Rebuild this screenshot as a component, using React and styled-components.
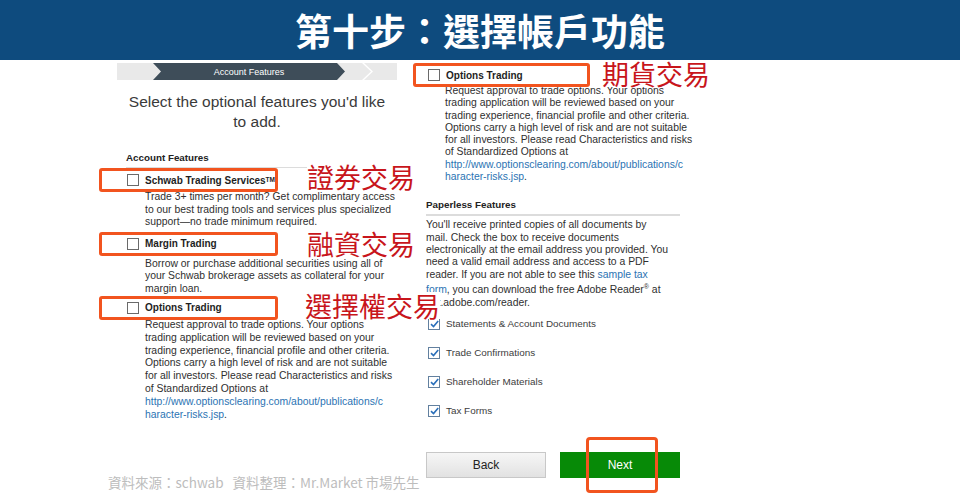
import React from "react";
import styled, { createGlobalStyle } from "styled-components";

const Global = createGlobalStyle`
  html, body { margin: 0; padding: 0; background: #fff; }
  body {
    width: 960px; height: 502px; overflow: hidden;
    font-family: "Liberation Sans", Arial, sans-serif;
    color: #2f2f2f;
  }
`;

const Header = styled.header`
  height: 60px;
  background: #0e4b7e;
  display: flex;
  align-items: center;
  justify-content: center;
  color: #fff;
  font-family: "Noto Sans CJK TC", "Noto Sans CJK SC", sans-serif;
  font-weight: 700;
  font-size: 37px;
  line-height: 1;
`;

const Main = styled.main`
  display: flex;
  padding-left: 99px;
`;

const LeftCol = styled.section`
  width: 311px;
  height: 442px;
  display: flex;
  flex-direction: column;
`;

const RightCol = styled.section`
  width: 290px;
  display: flex;
  flex-direction: column;
`;

const StepBar = styled.div`
  margin: 3px 0 0 18px;
  width: 280px;
  height: 17px;
  background: #e9e9e9;
  display: flex;
`;

const StepGap = styled.div`
  width: ${(p) => p.$w}px;
  flex: none;
`;

const ActiveStep = styled.div`
  width: 192px;
  flex: none;
  background: #3e4d59;
  color: #fff;
  font-size: 9px;
  display: flex;
  align-items: center;
  justify-content: center;
  clip-path: polygon(0 0, calc(100% - 8px) 0, 100% 50%, calc(100% - 8px) 100%, 0 100%, 8px 50%);
`;

const Chevron = styled.div`
  width: 11px;
  height: 17px;
  flex: none;
  background: #fff;
  clip-path: polygon(0 0, 2px 0, 100% 50%, 2px 100%, 0 100%, calc(100% - 2px) 50%);
`;

const Lead = styled.h1`
  margin: 12px 0 0 18px;
  width: 280px;
  text-align: center;
  font-size: 15.5px;
  line-height: 20px;
  font-weight: 400;
  color: #3a3a3a;
`;

const SectionTitle = styled.h2`
  margin: ${(p) => p.$mt}px 0 0 ${(p) => p.$ml}px;
  width: ${(p) => p.$w}px;
  font-size: 9.8px;
  line-height: 14px;
  font-weight: 700;
  color: #222;
  padding-bottom: 2px;
  border-bottom: ${(p) => p.$line}px solid #dcdcdc;
`;

const Highlight = styled.div`
  position: relative;
  z-index: 2;
  box-sizing: border-box;
  margin: ${(p) => p.$mt}px 0 0 ${(p) => p.$ml}px;
  width: ${(p) => p.$w}px;
  height: 24px;
  border: 3px solid #f2541f;
  border-radius: 3px;
  display: flex;
  align-items: center;
  padding-left: ${(p) => p.$pl}px;
`;

const Box = styled.span`
  width: 12px;
  height: 12px;
  box-sizing: border-box;
  border: 1.5px solid ${(p) => (p.$checked ? "#62809f" : "#6a6a6a")};
  background: #fff;
  flex: none;
  display: flex;
  align-items: center;
  justify-content: center;
`;

const OptionLabel = styled.span`
  margin-left: 6px;
  font-size: ${(p) => (p.$bold ? 10 : 9.9)}px;
  font-weight: ${(p) => (p.$bold ? 700 : 400)};
  color: ${(p) => (p.$bold ? "#1e1e1e" : "#3c3c3c")};
  white-space: nowrap;
`;

const Tm = styled.span`
  font-size: 6.5px;
  vertical-align: 2px;
`;

const Note = styled.span`
  position: absolute;
  left: ${(p) => p.$x}px;
  top: ${(p) => p.$y}px;
  font-family: "Noto Sans CJK TC", "Noto Sans CJK SC", sans-serif;
  font-size: 27px;
  line-height: 1;
  color: #c8151b;
  background: #fff;
  white-space: nowrap;
  z-index: 5;
`;

const Desc = styled.p`
  margin: ${(p) => p.$mt}px 0 0 ${(p) => p.$ml}px;
  font-size: 10.4px;
  line-height: ${(p) => p.$lh}px;
  color: #2f2f2f;
`;

const Line = styled.span`
  display: block;
  white-space: nowrap;
`;

const Link = styled.span`
  color: #2b73b3;
`;

const Reg = styled.sup`
  font-size: 7px;
`;

const CheckRow = styled.div`
  margin-left: 18px;
  height: 29px;
  display: flex;
  align-items: center;
`;

const Buttons = styled.div`
  margin: 27px 0 0 16px;
  display: flex;
  gap: 14px;
`;

const Button = styled.button`
  position: relative;
  width: 120px;
  height: 26px;
  padding: 0;
  box-sizing: border-box;
  font-family: "Liberation Sans", sans-serif;
  font-size: 12px;
  cursor: pointer;
  border: 1px solid ${(p) => (p.$primary ? "#078a07" : "#c8c8c8")};
  background: ${(p) => (p.$primary ? "#078a07" : "linear-gradient(#f6f6f6, #e2e2e2)")};
  color: ${(p) => (p.$primary ? "#fff" : "#222")};
`;

const ButtonMark = styled.span`
  position: absolute;
  left: 25px;
  top: -16px;
  width: 72px;
  height: 56px;
  box-sizing: border-box;
  border: 3px solid #f2541f;
  border-radius: 4px;
`;

const Source = styled.footer`
  margin: auto 0 10px 9px;
  font-family: "Noto Sans CJK TC", "Noto Sans CJK SC", sans-serif;
  font-size: 13.5px;
  line-height: 20px;
  color: #bdbdbd;
  white-space: pre;
`;

const CheckIcon = () => (
  <svg width="9" height="8" viewBox="0 0 9 8">
    <path d="M1 4.2 L3.5 6.6 L8.2 1" fill="none" stroke="#2a6fba" strokeWidth="1.6" />
  </svg>
);

const Check = ({ checked }) => <Box $checked={checked}>{checked && <CheckIcon />}</Box>;

const OptionsDesc = ({ ml, mt, lh }) => (
  <Desc $ml={ml} $mt={mt} $lh={lh}>
    <Line>Request approval to trade options. Your options</Line>
    <Line>trading application will be reviewed based on your</Line>
    <Line>trading experience, financial profile and other criteria.</Line>
    <Line>Options carry a high level of risk and are not suitable</Line>
    <Line>for all investors. Please read Characteristics and risks</Line>
    <Line>of Standardized Options at</Line>
    <Line>
      <Link>http://www.optionsclearing.com/about/publications/c</Link>
    </Line>
    <Line>
      <Link>haracter-risks.jsp</Link>.
    </Line>
  </Desc>
);

export default function App() {
  return (
    <>
      <Global />
      <Header>第十步：選擇帳戶功能</Header>
      <Main>
        <LeftCol>
          <StepBar>
            <StepGap $w={36} />
            <ActiveStep>Account Features</ActiveStep>
            <StepGap $w={17} />
            <Chevron />
          </StepBar>
          <Lead>
            Select the optional features you'd like
            <br />
            to add.
          </Lead>
          <SectionTitle $mt={19} $ml={27} $w={266} $line={1}>Account Features</SectionTitle>

          <Highlight $mt={0} $ml={0} $w={179} $pl={25}>
            <Check />
            <OptionLabel $bold>
              Schwab Trading Services<Tm>TM</Tm>
            </OptionLabel>
            <Note $x={205} $y={-8}>證券交易</Note>
          </Highlight>
          <Desc $ml={46} $mt={-1} $lh={12.5}>
            <Line>Trade 3+ times per month? Get complimentary access</Line>
            <Line>to our best trading tools and services plus specialized</Line>
            <Line>support—no trade minimum required.</Line>
          </Desc>

          <Highlight $mt={3} $ml={0} $w={179} $pl={25}>
            <Check />
            <OptionLabel $bold>Margin Trading</OptionLabel>
            <Note $x={205} $y={-5}>融資交易</Note>
          </Highlight>
          <Desc $ml={46} $mt={2} $lh={12.8}>
            <Line>Borrow or purchase additional securities using all of</Line>
            <Line>your Schwab brokerage assets as collateral for your</Line>
            <Line>margin loan.</Line>
          </Desc>

          <Highlight $mt={0} $ml={0} $w={179} $pl={25}>
            <Check />
            <OptionLabel $bold>Options Trading</OptionLabel>
            <Note $x={203} $y={-7}>選擇權交易</Note>
          </Highlight>
          <OptionsDesc ml={46} mt={-1} lh={12.85} />

          <Source>資料來源：schwab   資料整理：Mr.Market 市場先生</Source>
        </LeftCol>

        <RightCol>
          <Highlight $mt={3} $ml={3} $w={177} $pl={12}>
            <Check />
            <OptionLabel $bold>Options Trading</OptionLabel>
            <Note $x={186} $y={-6}>期貨交易</Note>
          </Highlight>
          <OptionsDesc ml={35} mt={-2} lh={12.3} />

          <SectionTitle $mt={15} $ml={16} $w={254} $line={2}>Paperless Features</SectionTitle>
          <Desc $ml={16} $mt={3} $lh={12.35}>
            <Line>You'll receive printed copies of all documents by</Line>
            <Line>mail. Check the box to receive documents</Line>
            <Line>electronically at the email address you provided. You</Line>
            <Line>need a valid email address and access to a PDF</Line>
            <Line>
              reader. If you are not able to see this <Link>sample tax</Link>
            </Line>
            <Line>
              <Link>form</Link>, you can download the free Adobe Reader<Reg>®</Reg> at
            </Line>
            <Line>get.adobe.com/reader.</Line>
          </Desc>

          <CheckRow>
            <Check checked />
            <OptionLabel>Statements &amp; Account Documents</OptionLabel>
          </CheckRow>
          <CheckRow>
            <Check checked />
            <OptionLabel>Trade Confirmations</OptionLabel>
          </CheckRow>
          <CheckRow>
            <Check checked />
            <OptionLabel>Shareholder Materials</OptionLabel>
          </CheckRow>
          <CheckRow>
            <Check checked />
            <OptionLabel>Tax Forms</OptionLabel>
          </CheckRow>

          <Buttons>
            <Button>Back</Button>
            <Button $primary>
              Next
              <ButtonMark />
            </Button>
          </Buttons>
        </RightCol>
      </Main>
    </>
  );
}
